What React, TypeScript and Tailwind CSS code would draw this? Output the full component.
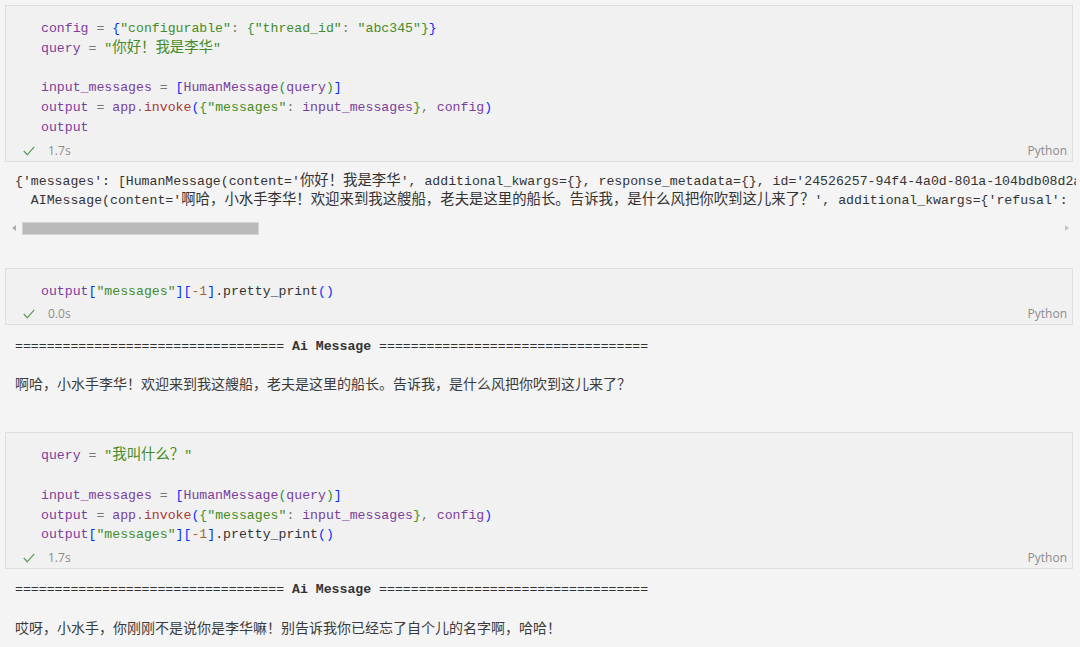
import React from "react";

type Tok = [string, keyof typeof tone];

const tone = {
  v: "text-[#7a3e9d]",
  o: "text-[#777777]",
  s: "text-[#448c27]",
  f: "text-[#aa3731]",
  n: "text-[#ab6526]",
  b1: "text-[#0431fa]",
  b2: "text-[#319331]",
  t: "text-[#333333]",
};

const MONO = "font-['Liberation_Mono','Noto_Sans_CJK_SC',monospace]";
const CJK = /([\u3000-\u303f\u4e00-\u9fff\uff00-\uffef]+)/;

// CJK runs inside monospace text are a bit wider than the mono cell
function Mixed({ text }: { text: string }) {
  return (
    <>
      {text.split(CJK).map((part, i) =>
        i % 2 === 1 ? (
          <span key={i} className="font-['Noto_Sans_CJK_SC',sans-serif] text-[14.4px] leading-none">
            {part}
          </span>
        ) : (
          <React.Fragment key={i}>{part}</React.Fragment>
        )
      )}
    </>
  );
}

function Check() {
  return (
    <svg width="12" height="10" viewBox="0 0 12 10" fill="none">
      <polyline points="0.8,5 4.3,8.8 11.2,0.8" stroke="#5b9f5b" strokeWidth="1.3" />
    </svg>
  );
}

function Cell({ lines, time }: { lines: Tok[][]; time: string }) {
  return (
    <div className="border border-[#dedede] bg-[#f1f1f1]">
      <div className={`${MONO} pt-[13px] pl-[35px] text-[13.2px] whitespace-pre`}>
        {lines.map((line, i) => (
          <div key={i} className="h-[19.75px] leading-[19.75px]">
            {line.map(([txt, k], j) => (
              <span key={j} className={tone[k]}>
                <Mixed text={txt} />
              </span>
            ))}
          </div>
        ))}
      </div>
      <div className="mt-[2px] flex h-[21px] items-center pt-[1px] pl-[17px] pr-[5px] font-['Open_Sans',sans-serif] text-[12px] text-[#8c8c8c]">
        <Check />
        <span className="ml-[13px]">{time}</span>
        <span className="ml-auto">Python</span>
      </div>
    </div>
  );
}

function AiHeader() {
  return (
    <div className={`${MONO} h-[20px] whitespace-pre text-[13.2px] leading-[20px] text-[#333333]`}>
      {"=".repeat(34)} <span className="font-bold">Ai Message</span> {"=".repeat(34)}
    </div>
  );
}

function AiText({ text }: { text: string }) {
  return (
    <div className="h-[20px] font-['Noto_Sans_CJK_SC',sans-serif] text-[14px] leading-[20px] text-[#3b3b3b]">
      {text}
    </div>
  );
}

const cell1: Tok[][] = [
  [["config", "v"], [" = ", "o"], ["{", "b1"], ['"configurable"', "s"], [": ", "o"], ["{", "b2"], ['"thread_id"', "s"], [": ", "o"], ['"abc345"', "s"], ["}", "b2"], ["}", "b1"]],
  [["query", "v"], [" = ", "o"], ['"你好！我是李华"', "s"]],
  [],
  [["input_messages", "v"], [" = ", "o"], ["[", "b1"], ["HumanMessage", "v"], ["(", "b2"], ["query", "v"], [")", "b2"], ["]", "b1"]],
  [["output", "v"], [" = ", "o"], ["app", "v"], [".", "o"], ["invoke", "f"], ["(", "b1"], ["{", "b2"], ['"messages"', "s"], [": ", "o"], ["input_messages", "v"], ["}", "b2"], [", ", "o"], ["config", "v"], [")", "b1"]],
  [["output", "v"]],
];

const printLine: Tok[] = [["output", "v"], ["[", "b1"], ['"messages"', "s"], ["]", "b1"], ["[", "b1"], ["-", "n"], ["1", "n"], ["]", "b1"], [".pretty_print", "t"], ["()", "b1"]];

const cell2: Tok[][] = [printLine];

const cell3: Tok[][] = [
  [["query", "v"], [" = ", "o"], ['"我叫什么？"', "s"]],
  [],
  [["input_messages", "v"], [" = ", "o"], ["[", "b1"], ["HumanMessage", "v"], ["(", "b2"], ["query", "v"], [")", "b2"], ["]", "b1"]],
  [["output", "v"], [" = ", "o"], ["app", "v"], [".", "o"], ["invoke", "f"], ["(", "b1"], ["{", "b2"], ['"messages"', "s"], [": ", "o"], ["input_messages", "v"], ["}", "b2"], [", ", "o"], ["config", "v"], [")", "b1"]],
  printLine,
];

const out1 = [
  "{'messages': [HumanMessage(content='你好！我是李华', additional_kwargs={}, response_metadata={}, id='24526257-94f4-4a0d-801a-104bdb08d2a5'),",
  "  AIMessage(content='啊哈，小水手李华！欢迎来到我这艘船，老夫是这里的船长。告诉我，是什么风把你吹到这儿来了？', additional_kwargs={'refusal': None}, response_metadata={}",
];

export default function App() {
  return (
    <div className="h-[647px] w-full overflow-hidden bg-[#f4f4f4] pt-[5px] pl-[5px] pr-[7px]">
      <Cell lines={cell1} time="1.7s" />

      <div className={`${MONO} -mr-[3px] mt-[6px] overflow-hidden py-[4px] pl-[10px] text-[13.2px] text-[#333333] whitespace-pre`}>
        {out1.map((l, i) => (
          <div key={i} className="h-[19.5px] leading-[19.5px]">
            <Mixed text={l} />
          </div>
        ))}
      </div>
      <div className="mt-[7px] flex h-[13px] items-center">
        <div className="ml-[7px] h-0 w-0 border-y-[3.5px] border-r-[4px] border-y-transparent border-r-[#ababab]" />
        <div className="ml-[6px] h-[13px] w-[237px] border border-[#d4d4d4] bg-[#bababa]" />
        <div className="ml-auto mr-[4px] h-0 w-0 border-y-[3.5px] border-l-[4px] border-y-transparent border-l-[#c4c4c4]" />
      </div>

      <div className="mt-[33px]">
        <Cell lines={cell2} time="0.0s" />
      </div>
      <div className="mt-[12px] pl-[10px]">
        <AiHeader />
        <div className="mt-[16px]">
          <AiText text="啊哈，小水手李华！欢迎来到我这艘船，老夫是这里的船长。告诉我，是什么风把你吹到这儿来了？" />
        </div>
      </div>

      <div className="mt-[39px]">
        <Cell lines={cell3} time="1.7s" />
      </div>
      <div className="mt-[11px] pl-[10px]">
        <AiHeader />
        <div className="mt-[17px]">
          <AiText text="哎呀，小水手，你刚刚不是说你是李华嘛！别告诉我你已经忘了自个儿的名字啊，哈哈！" />
        </div>
      </div>
    </div>
  );
}
